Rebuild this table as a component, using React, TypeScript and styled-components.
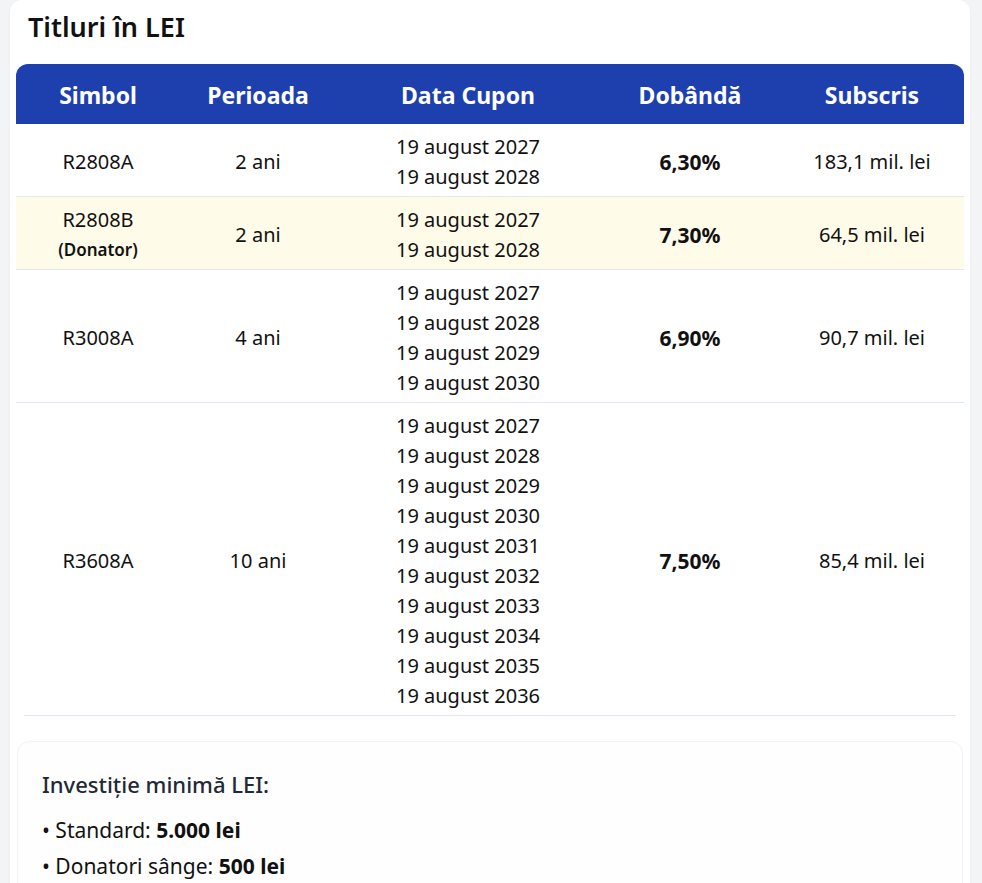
import React from "react";
import styled, { createGlobalStyle } from "styled-components";

const GlobalStyle = createGlobalStyle`
  body {
    margin: 0;
    background: #f3f4f6;
    font-family: "Noto Sans", "Open Sans", Arial, sans-serif;
    color: #111827;
  }
`;

interface Bond {
  symbol: string;
  donor?: boolean;
  period: string;
  years: number[];
  rate: string;
  subscribed: string;
}

const bonds: Bond[] = [
  { symbol: "R2808A", period: "2 ani", years: [2027, 2028], rate: "6,30%", subscribed: "183,1 mil. lei" },
  { symbol: "R2808B", donor: true, period: "2 ani", years: [2027, 2028], rate: "7,30%", subscribed: "64,5 mil. lei" },
  { symbol: "R3008A", period: "4 ani", years: [2027, 2028, 2029, 2030], rate: "6,90%", subscribed: "90,7 mil. lei" },
  {
    symbol: "R3608A",
    period: "10 ani",
    years: [2027, 2028, 2029, 2030, 2031, 2032, 2033, 2034, 2035, 2036],
    rate: "7,50%",
    subscribed: "85,4 mil. lei",
  },
];

export default function App() {
  return (
    <>
      <GlobalStyle />
      <Card>
        <Title>Titluri în LEI</Title>
        <Table>
          <colgroup>
            <col style={{ width: 164 }} />
            <col style={{ width: 156 }} />
            <col style={{ width: 264 }} />
            <col style={{ width: 180 }} />
            <col style={{ width: 184 }} />
          </colgroup>
          <thead>
            <tr>
              <Th>Simbol</Th>
              <Th>Perioada</Th>
              <Th>Data Cupon</Th>
              <Th>Dobândă</Th>
              <Th>Subscris</Th>
            </tr>
          </thead>
          <tbody>
            {bonds.map((b, i) => (
              <Row key={b.symbol} $highlight={!!b.donor} $last={i === bonds.length - 1}>
                <Td>
                  {b.symbol}
                  {b.donor && <DonorTag>(Donator)</DonorTag>}
                </Td>
                <Td>{b.period}</Td>
                <Td>
                  {b.years.map((y) => (
                    <div key={y}>19 august {y}</div>
                  ))}
                </Td>
                <Td $bold>{b.rate}</Td>
                <Td>{b.subscribed}</Td>
              </Row>
            ))}
          </tbody>
        </Table>
        <Divider />
        <InfoBox>
          <InfoTitle>Investiție minimă LEI:</InfoTitle>
          <InfoLine>
            • Standard: <b>5.000 lei</b>
          </InfoLine>
          <InfoLine>
            • Donatori sânge: <b>500 lei</b>
          </InfoLine>
        </InfoBox>
      </Card>
    </>
  );
}

const Card = styled.div`
  margin: 0 12px 0 10px;
  background: #ffffff;
  border-radius: 12px;
  box-shadow: 0 1px 3px rgba(0, 0, 0, 0.05);
  padding: 0 6px 24px;
  box-sizing: border-box;
  min-height: 900px;
`;

const Title = styled.h2`
  margin: 0;
  padding: 9px 12px 0;
  height: 64px;
  box-sizing: border-box;
  font-size: 27px;
  font-weight: 600;
  line-height: 36px;
  color: #111111;
`;

const Table = styled.table`
  width: 100%;
  border-collapse: separate;
  border-spacing: 0;
  table-layout: fixed;
`;

const Th = styled.th`
  background: #1e40af;
  color: #ffffff;
  height: 58px;
  padding: 2px 8px 0;
  font-size: 23px;
  font-weight: 700;
  text-align: center;
  &:first-child {
    border-top-left-radius: 12px;
  }
  &:last-child {
    border-top-right-radius: 12px;
  }
`;

const Row = styled.tr<{ $highlight: boolean; $last: boolean }>`
  background: ${(p) => (p.$highlight ? "#fefbe8" : "#ffffff")};
  td {
    border-bottom: ${(p) => (p.$last ? "none" : "1px solid #e2e8f0")};
  }
`;

const Td = styled.td<{ $bold?: boolean }>`
  padding: 8px 8px 4px;
  text-align: center;
  vertical-align: middle;
  font-size: ${(p) => (p.$bold ? "21px" : "20px")};
  line-height: 30px;
  font-weight: ${(p) => (p.$bold ? 700 : 400)};
  color: #111111;
`;

const DonorTag = styled.div`
  font-size: 17px;
  font-weight: 600;
  line-height: 30px;
`;

const Divider = styled.div`
  height: 1px;
  background: #e2e8f0;
  margin: 0 8px 25px;
`;

const InfoBox = styled.div`
  margin: 0 1px;
  border: 1px solid #f1f2f4;
  border-radius: 12px;
  background: #fefefe;
  padding: 26px 24px 20px;
`;

const InfoTitle = styled.h3`
  margin: 0 0 12px;
  font-size: 22px;
  font-weight: 500;
  line-height: 32px;
  color: #1f2937;
`;

const InfoLine = styled.div`
  font-size: 21px;
  line-height: 36px;
  color: #111111;
  b {
    font-weight: 700;
  }
`;
